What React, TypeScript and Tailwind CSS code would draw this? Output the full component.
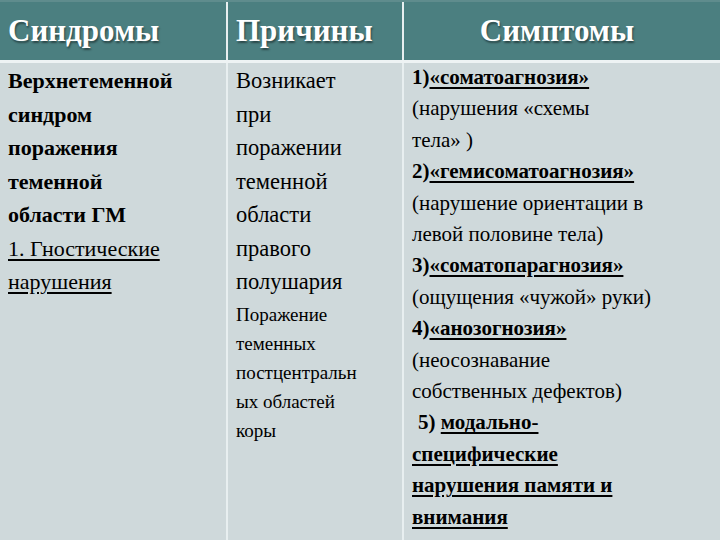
import type { ReactNode } from "react";

const serif = "font-['Times_New_Roman','Liberation_Serif',serif]";

function U({ children }: { children: ReactNode }) {
  return <span className={`${serif} underline decoration-[2px] underline-offset-[3px]`}>{children}</span>;
}

function L({ children, bold = false, className = "" }: { children: ReactNode; bold?: boolean; className?: string }) {
  return <div className={`${serif} ${bold ? "font-bold" : "font-normal"} ${className}`}>{children}</div>;
}

export default function App() {
  return (
    <div className={`${serif} w-[720px] h-[540px] overflow-hidden bg-[#cfd9db] text-black flex flex-col`}>
      {/* header */}
      <div className="h-[60px] shrink-0 bg-[#4b7f80] border-t-[2px] border-[#5f8c8d] grid grid-cols-[228px_176px_1fr] text-white text-[31px] [text-shadow:1px_2px_2px_rgba(0,0,0,0.45)]">
        <L bold className="flex items-center pl-[8px] border-r-[2px] border-[#e8eff0]">Синдромы</L>
        <L bold className="flex items-center pl-[8px] border-r-[2px] border-[#e8eff0]">Причины</L>
        <L bold className="flex items-center justify-center pr-[10px]">Симптомы</L>
      </div>
      <div className="h-[3px] shrink-0 bg-[#eef3f4]" />

      {/* body */}
      <div className="flex-1 grid grid-cols-[228px_176px_1fr]">
        <div className="border-r-[2px] border-[#e8eff0] pl-[8px] pt-[1px] text-[22px] leading-[33.5px]">
          <L bold>Верхнетеменной</L>
          <L bold>синдром</L>
          <L bold>поражения</L>
          <L bold>теменной</L>
          <L bold>области ГМ</L>
          <L><U>1. Гностические</U></L>
          <L><U>нарушения</U></L>
        </div>

        <div className="border-r-[2px] border-[#e8eff0] pl-[8px] pt-[1px]">
          <div className="text-[22.5px] leading-[33.5px]">
            <L>Возникает</L>
            <L>при</L>
            <L>поражении</L>
            <L>теменной</L>
            <L>области</L>
            <L>правого</L>
            <L>полушария</L>
          </div>
          <div className="text-[19px] leading-[29px] mt-[1px]">
            <L>Поражение</L>
            <L>теменных</L>
            <L>постцентральн</L>
            <L>ых областей</L>
            <L>коры</L>
          </div>
        </div>

        <div className="pl-[8px] text-[21px] leading-[31.4px] -mt-[1px]">
          <L bold>1)<U>«соматоагнозия»</U></L>
          <L>(нарушения «схемы</L>
          <L>тела» )</L>
          <L bold>2)<U>«гемисоматоагнозия»</U></L>
          <L>(нарушение ориентации в</L>
          <L>левой половине тела)</L>
          <L bold>3)<U>«соматопарагнозия»</U></L>
          <L>(ощущения «чужой» руки)</L>
          <L bold>4)<U>«анозогнозия»</U></L>
          <L>(неосознавание</L>
          <L>собственных дефектов)</L>
          <L bold className="pl-[6px]">5) <U>модально-</U></L>
          <L bold><U>специфические</U></L>
          <L bold><U>нарушения памяти и</U></L>
          <L bold><U>внимания</U></L>
        </div>
      </div>
    </div>
  );
}
